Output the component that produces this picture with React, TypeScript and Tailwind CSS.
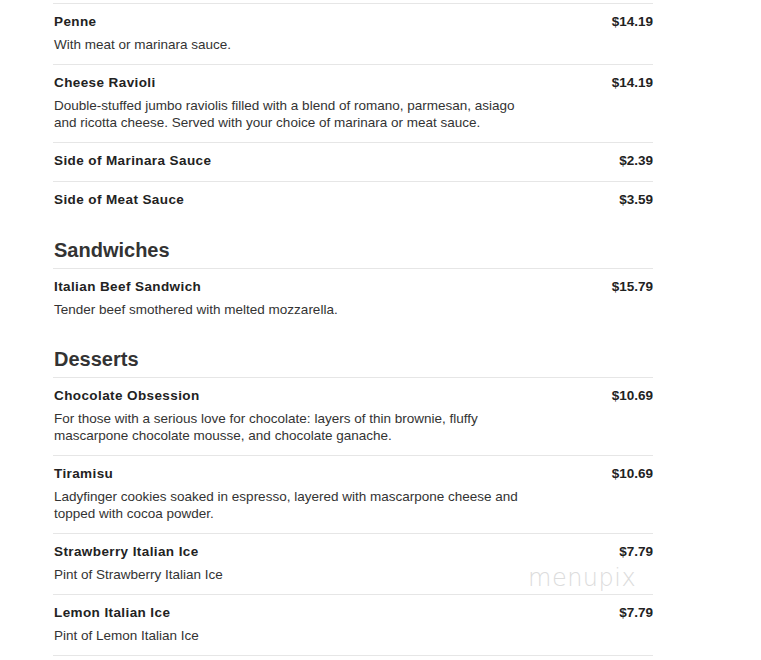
import React from "react"

type Item = { name: string; price: string; desc?: string }
type Section = { title?: string; items: Item[] }

const sections: Section[] = [
  {
    items: [
      { name: "Penne", price: "$14.19", desc: "With meat or marinara sauce." },
      {
        name: "Cheese Ravioli",
        price: "$14.19",
        desc: "Double-stuffed jumbo raviolis filled with a blend of romano, parmesan, asiago and ricotta cheese. Served with your choice of marinara or meat sauce.",
      },
      { name: "Side of Marinara Sauce", price: "$2.39" },
      { name: "Side of Meat Sauce", price: "$3.59" },
    ],
  },
  {
    title: "Sandwiches",
    items: [{ name: "Italian Beef Sandwich", price: "$15.79", desc: "Tender beef smothered with melted mozzarella." }],
  },
  {
    title: "Desserts",
    items: [
      {
        name: "Chocolate Obsession",
        price: "$10.69",
        desc: "For those with a serious love for chocolate: layers of thin brownie, fluffy mascarpone chocolate mousse, and chocolate ganache.",
      },
      {
        name: "Tiramisu",
        price: "$10.69",
        desc: "Ladyfinger cookies soaked in espresso, layered with mascarpone cheese and topped with cocoa powder.",
      },
      { name: "Strawberry Italian Ice", price: "$7.79", desc: "Pint of Strawberry Italian Ice" },
      { name: "Lemon Italian Ice", price: "$7.79", desc: "Pint of Lemon Italian Ice" },
    ],
  },
]

function MenuRow({ item, first }: { item: Item; first: boolean }) {
  return (
    <div className={(first ? "" : "border-t border-[#e6e6e6] ") + "pl-[1px] pt-[9px] pb-[11px]"}>
      <div className="flex items-center justify-between h-[18px]">
        <span className="text-[13.5px] font-bold tracking-[0.4px] text-[#222]">{item.name}</span>
        <span className="text-[13.5px] font-bold text-[#222]">{item.price}</span>
      </div>
      {item.desc && (
        <p className="mt-[5px] w-[478px] text-[13.5px] leading-[17px] text-[#333]">{item.desc}</p>
      )}
    </div>
  )
}

export default function App() {
  return (
    <div className="relative min-h-[660px] bg-white font-['Liberation_Sans',Arial,sans-serif]">
      <div className="ml-[53px] w-[600px] pt-[3px]">
        {sections.map((s, si) => (
          <div key={si} className={s.title ? "mt-[17px]" : ""}>
            {s.title && (
              <h2 className="pl-[1px] pt-[1px] pb-[6px] text-[20px] font-bold leading-[24px] text-[#333] border-b border-[#e6e6e6]">
                {s.title}
              </h2>
            )}
            {!s.title && <div className="border-t border-[#e6e6e6]" />}
            {s.items.map((it, i) => (
              <MenuRow key={it.name} item={it} first={i === 0} />
            ))}
          </div>
        ))}
        <div className="border-t border-[#e6e6e6]" />
      </div>
      <div className="absolute left-[528px] top-[564px] text-[24px] font-light tracking-[0.5px] leading-[28px] text-[#dcdcdc] font-['DejaVu_Sans',sans-serif] select-none">
        menupix
      </div>
    </div>
  )
}
